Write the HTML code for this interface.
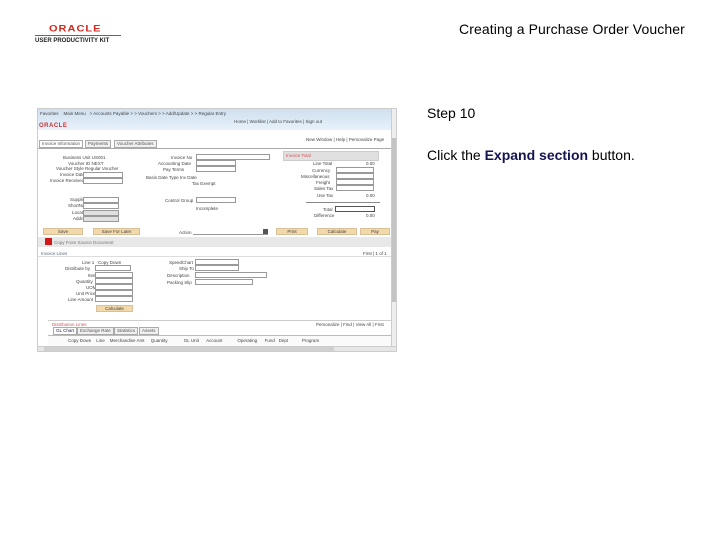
<!DOCTYPE html>
<html><head><meta charset="utf-8"><style>
*{margin:0;padding:0;box-sizing:border-box}
body{width:720px;height:540px;background:#fff;position:relative;overflow:hidden;font-family:"Liberation Sans",sans-serif}
.a{position:absolute}
.t{position:absolute;font-size:4.5px;color:#444;white-space:nowrap;line-height:5px}
.in{position:absolute;height:6px;border:1px solid #999;background:#fff}
.ic{position:absolute;width:5px;height:5px;background:#8a9aaa}
.btn{position:absolute;height:7px;background:#f3d8aa;border:1px solid #d8c098;font-size:4.5px;color:#444;text-align:center;line-height:5px}
.tab{position:absolute;height:8px;border:1px solid #aaa;background:#f0f0f0;font-size:4.5px;color:#555;line-height:6px;padding:0 2px}
</style></head><body>
<div class="a" style="left:49px;top:23px;font-size:11px;font-weight:bold;color:#d32a1f;letter-spacing:1px;transform:scaleY(0.8)">ORACLE</div>
<div class="a" style="left:35px;top:35px;width:86px;height:1px;background:#666"></div>
<div class="a" style="left:35px;top:38px;font-size:6px;font-weight:bold;color:#222;white-space:nowrap">USER PRODUCTIVITY KIT</div>
<div class="a" style="left:459px;top:21px;font-size:14px;color:#000;white-space:nowrap;letter-spacing:0.1px">Creating a Purchase Order Voucher</div>
<div class="a" style="left:427px;top:105px;font-size:14px;color:#000">Step 10</div>
<div class="a" style="left:427px;top:147px;font-size:14px;color:#000;white-space:nowrap">Click the <b style="color:#141452">Expand section</b> button.</div>

<div class="a" style="left:37px;top:108px;width:360px;height:244px;background:#fff;overflow:hidden;border:1px solid #ccc">
 <div class="a" style="left:0;top:0;width:360px;height:21px;background:linear-gradient(#cfe0f0,#e8f1fa)"></div>
 <div class="t" style="left:2px;top:2px">Favorites &nbsp;&nbsp; Main Menu &nbsp; &gt; Accounts Payable &gt; &gt; Vouchers &gt; &gt; Add/Update &gt; &gt; Regular Entry</div>
 <div class="t" style="left:196px;top:10px">Home | Worklist | Add to Favorites | Sign out</div>
 <div class="a" style="left:1px;top:14px;font-size:6px;font-weight:bold;color:#c33;letter-spacing:.5px">ORACLE</div>
 <div class="t" style="left:268px;top:28px">New Window | Help | Personalize Page</div>
 <div class="tab" style="left:1px;top:31px;background:#fff">Invoice Information</div>
 <div class="tab" style="left:47px;top:31px">Payments</div>
 <div class="tab" style="left:76px;top:31px">Voucher Attributes</div>
 <div class="a" style="left:0;top:39px;width:353px;height:1px;background:#aaa"></div>
 <div class="a" style="left:353px;top:0;width:7px;height:237px;background:#eee;border-left:1px solid #ccc"></div>
 <div class="a" style="left:354px;top:29px;width:5px;height:164px;background:#c4c4c4"></div>
 <div class="t" style="left:25px;top:46px">Business Unit US001</div>
 <div class="t" style="left:30px;top:52px">Voucher ID NEXT</div>
 <div class="t" style="left:18px;top:57px">Voucher Style Regular Voucher</div>
 <div class="t" style="left:22px;top:63px">Invoice Date</div><div class="in" style="left:45px;top:63px;width:40px"></div>
 <div class="t" style="left:12px;top:69px">Invoice Received</div><div class="in" style="left:45px;top:69px;width:40px"></div>
 <div class="t" style="left:32px;top:88px">Supplier ID</div><div class="in" style="left:45px;top:88px;width:36px"></div>
 <div class="t" style="left:30px;top:94px">ShortName</div><div class="in" style="left:45px;top:94px;width:36px"></div>
 <div class="t" style="left:34px;top:101px">Location</div><div class="in" style="left:45px;top:101px;width:36px;background:#e0e0e0"></div>
 <div class="t" style="left:35px;top:107px">Address</div><div class="in" style="left:45px;top:107px;width:36px;background:#e0e0e0"></div>
 <div class="t" style="left:133px;top:46px">Invoice No</div><div class="in" style="left:158px;top:45px;width:74px"></div>
 <div class="t" style="left:120px;top:52px">Accounting Date</div><div class="in" style="left:158px;top:51px;width:40px"></div>
 <div class="t" style="left:125px;top:58px">Pay Terms</div><div class="in" style="left:158px;top:57px;width:40px"></div>
 <div class="t" style="left:108px;top:66px">Basis Date Type Inv Date</div>
 <div class="t" style="left:154px;top:72px">Tax Exempt</div>
 <div class="t" style="left:127px;top:89px">Control Group</div><div class="in" style="left:158px;top:88px;width:40px"></div>
 <div class="t" style="left:158px;top:97px">Incomplete</div>
 <div class="a" style="left:245px;top:42px;width:96px;height:10px;background:#e0e0e0;border:1px solid #ccc"></div>
 <div class="t" style="left:248px;top:44px;color:#c55">Invoice Total</div>
 <div class="t" style="left:275px;top:52px">Line Total</div><div class="t" style="left:328px;top:52px">0.00</div>
 <div class="t" style="left:274px;top:59px">Currency</div><div class="in" style="left:298px;top:58px;width:38px"></div>
 <div class="t" style="left:263px;top:65px">Miscellaneous</div><div class="in" style="left:298px;top:64px;width:38px"></div>
 <div class="t" style="left:278px;top:71px">Freight</div><div class="in" style="left:298px;top:70px;width:38px"></div>
 <div class="t" style="left:276px;top:77px">Sales Tax</div><div class="in" style="left:298px;top:76px;width:38px"></div>
 <div class="t" style="left:279px;top:84px">Use Tax</div><div class="t" style="left:328px;top:84px">0.00</div>
 <div class="a" style="left:268px;top:93px;width:74px;height:1px;background:#888"></div>
 <div class="t" style="left:285px;top:98px">Total</div><div class="in" style="left:297px;top:97px;width:40px;border-color:#555"></div>
 <div class="t" style="left:276px;top:104px">Difference</div><div class="t" style="left:328px;top:104px">0.00</div>
 <div class="btn" style="left:5px;top:119px;width:40px">Save</div>
 <div class="btn" style="left:55px;top:119px;width:47px">Save For Later</div>
 <div class="t" style="left:141px;top:121px">Action</div><div class="in" style="left:155px;top:120px;width:75px;border-width:0 0 1px 0"></div>
 <div class="ic" style="left:225px;top:120px;background:#555"></div>
 <div class="btn" style="left:238px;top:119px;width:32px">Print</div>
 <div class="btn" style="left:279px;top:119px;width:40px">Calculate</div>
 <div class="btn" style="left:322px;top:119px;width:30px">Pay</div>
 <div class="a" style="left:0;top:128px;width:353px;height:10px;background:#e8e8e8"></div>
 <div class="a" style="left:7px;top:129px;width:7px;height:7px;background:#d01818"></div>
 <div class="t" style="left:16px;top:131px;color:#777">Copy From Source Document</div>
 <div class="t" style="left:3px;top:142px;color:#5a6a8a">Invoice Lines</div>
 <div class="t" style="left:325px;top:142px">First | 1 of 1</div>
 <div class="a" style="left:0;top:147px;width:353px;height:1px;background:#ddd"></div>
 <div class="t" style="left:44px;top:151px">Line 1 &nbsp; Copy Down</div>
 <div class="t" style="left:27px;top:157px">Distribute by</div><div class="in" style="left:57px;top:156px;width:36px"></div>
 <div class="t" style="left:50px;top:164px">Item</div><div class="in" style="left:57px;top:163px;width:38px"></div>
 <div class="t" style="left:38px;top:170px">Quantity</div><div class="in" style="left:57px;top:169px;width:38px"></div>
 <div class="t" style="left:48px;top:176px">UOM</div><div class="in" style="left:57px;top:175px;width:38px"></div>
 <div class="t" style="left:38px;top:182px">Unit Price</div><div class="in" style="left:57px;top:181px;width:38px"></div>
 <div class="t" style="left:30px;top:188px">Line Amount</div><div class="in" style="left:57px;top:187px;width:38px"></div>
 <div class="btn" style="left:58px;top:196px;width:37px">Calculate</div>
 <div class="t" style="left:131px;top:151px">SpeedChart</div><div class="in" style="left:157px;top:150px;width:44px"></div>
 <div class="t" style="left:141px;top:157px">Ship To</div><div class="in" style="left:157px;top:156px;width:44px"></div>
 <div class="t" style="left:129px;top:164px">Description</div><div class="in" style="left:157px;top:163px;width:72px"></div>
 <div class="t" style="left:129px;top:171px">Packing Slip</div><div class="in" style="left:157px;top:170px;width:58px"></div>
 <div class="a" style="left:10px;top:211px;width:343px;height:1px;background:#ccc"></div>
 <div class="t" style="left:14px;top:213px;color:#c55">Distribution Lines</div>
 <div class="t" style="left:278px;top:213px">Personalize | Find | View All | First</div>
 <div class="tab" style="left:15px;top:218px;background:#fff;color:#225">GL Chart</div>
 <div class="tab" style="left:39px;top:218px">Exchange Rate</div>
 <div class="tab" style="left:76px;top:218px">Statistics</div>
 <div class="tab" style="left:101px;top:218px">Assets</div>
 <div class="a" style="left:10px;top:226px;width:343px;height:11px;border-top:1px solid #bbb;background:#fafafa"></div>
 <div class="t" style="left:30px;top:229px">Copy Down &nbsp;&nbsp; Line &nbsp;&nbsp; Merchandise Amt &nbsp;&nbsp;&nbsp; Quantity &nbsp;&nbsp;&nbsp;&nbsp;&nbsp;&nbsp;&nbsp;&nbsp;&nbsp;&nbsp;&nbsp; GL Unit &nbsp;&nbsp;&nbsp;&nbsp; Account &nbsp;&nbsp;&nbsp;&nbsp;&nbsp;&nbsp;&nbsp;&nbsp;&nbsp;&nbsp; Operating &nbsp;&nbsp;&nbsp;&nbsp; Fund &nbsp; Dept &nbsp;&nbsp;&nbsp;&nbsp;&nbsp;&nbsp;&nbsp;&nbsp;&nbsp; Program</div>
 <div class="a" style="left:0;top:237px;width:360px;height:7px;background:#e6e6e6;border-top:1px solid #ccc"></div>
 <div class="a" style="left:6px;top:238px;width:290px;height:5px;background:#d0d0d0"></div>
</div>
</body></html>
